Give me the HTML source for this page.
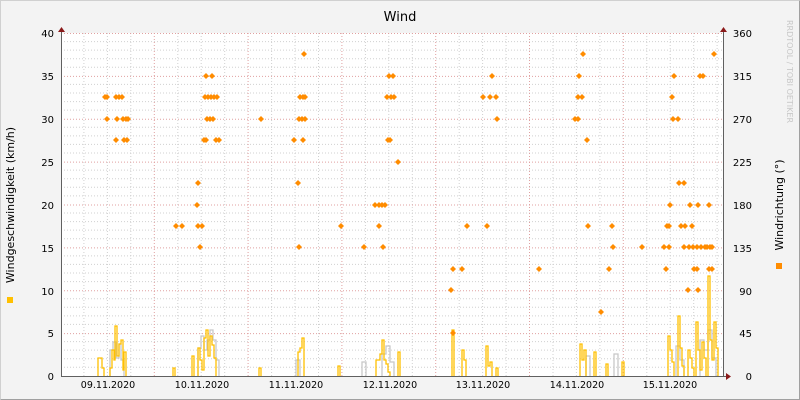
<!DOCTYPE html><html><head><style>body{margin:0;background:#f3f3f3}svg{display:block;font-family:"DejaVu Sans","Liberation Sans",sans-serif}</style></head><body>
<svg width="800" height="400" xmlns="http://www.w3.org/2000/svg">
<rect x="0" y="0" width="800" height="400" fill="#f3f3f3"/>
<path d="M0.5 399.5V0.5H799.5" stroke="#d0d0d0" fill="none"/>
<path d="M0.5 399.5H799.5V0.5" stroke="#a0a0a0" fill="none"/>
<rect x="61" y="33" width="662" height="343" fill="#ffffff"/>
<g id="g" stroke-dasharray="1,2" stroke-width="1">
<g stroke="#d0d0d0">
<path d="M61 41.6H723M61 50.1H723M61 58.7H723M61 67.3H723M61 84.4H723M61 93H723M61 101.6H723M61 110.1H723M61 127.3H723M61 135.9H723M61 144.4H723M61 153H723M61 170.1H723M61 178.7H723M61 187.3H723M61 195.9H723M61 213H723M61 221.6H723M61 230.1H723M61 238.7H723M61 255.9H723M61 264.4H723M61 273H723M61 281.6H723M61 298.7H723M61 307.3H723M61 315.9H723M61 324.4H723M61 341.6H723M61 350.1H723M61 358.7H723M61 367.3H723"/>
<path d="M83.9 33V376M107.4 33V376M130.8 33V376M177.8 33V376M201.2 33V376M224.7 33V376M271.6 33V376M295 33V376M318.5 33V376M365.4 33V376M388.8 33V376M412.3 33V376M459.2 33V376M482.6 33V376M506.1 33V376M553 33V376M576.4 33V376M599.9 33V376M646.8 33V376M670.2 33V376M693.7 33V376M717.1 33V376"/>
</g>
<g stroke="#e0a0a0">
<path d="M61 33.5H723M61 76.4H723M61 119.2H723M61 162.1H723M61 205H723M61 247.9H723M61 290.8H723M61 333.6H723"/>
<path d="M154.3 33V376M248.1 33V376M341.9 33V376M435.7 33V376M529.5 33V376M623.3 33V376"/>
</g></g>
<g fill="none" stroke-width="1.3">
<path stroke="#c8c8c8" d="M110 376V350H113V342H116V358H119V344H121V360H124V376M198 376V348H201V336H204V350H207V340H210V330H213V340H216V360H219V376M296 376V360H300V376M362 376V362H366V376M382 376V354H386V346H390V362H394V376M586 376V356H590V376M614 376V354H618V376M676 376V346H680V360H684V376M700 376V340H704V350H708V330H712V358H716V376"/>
<path stroke="#ffc000" d="M98 376V358H102V368H104V376M110 376V368H112V350H114V360H115V326H117V356H119V344H121V340H123V370H124V352H126V376M173 376V368H175V376M192 376V356H194V376M198 376V348H200V360H202V370H204V338H206V330H208V356H210V336H212V345H214V358H216V376M259 376V368H261V376M298 376V352H300V348H302V338H304V376M338 376V366H340V376M376 376V360H380V354H382V340H384V360H386V364H388V372H390V376M398 376V352H400V376M452 376V330H454V376M462 376V350H464V360H466V376M486 376V346H488V366H490V362H492V376M496 376V368H498V376M580 376V344H582V360H584V350H586V376M594 376V352H596V376M606 376V364H608V376M622 376V362H624V376M668 376V336H670V350H672V362H674V376M678 376V316H680V348H682V366H684V376M688 376V350H690V358H692V368H694V376M696 376V322H698V350H700V370H702V342H704V358H706V376M708 376V276H710V340H712V360H714V322H716V348H718V376"/>
</g>
<g fill="#ff8c00" id="dots"></g>
<path d="M61 376.5H727M61.5 28V376M723.5 28V376" stroke="#606060" stroke-width="1" fill="none"/>
<path d="M58 32L61.5 27L65 32Z M720 32L723.5 27L727 32Z M726 373L731 376.5L726 380Z" fill="#8b1a1a"/>
<g font-size="10" fill="#000" text-anchor="end">
<text x="54" y="37">40</text><text x="54" y="80">35</text><text x="54" y="123">30</text><text x="54" y="166">25</text><text x="54" y="209">20</text><text x="54" y="252">15</text><text x="54" y="295">10</text><text x="54" y="337">5</text><text x="54" y="380">0</text>
</g>
<g font-size="10" fill="#000" text-anchor="end">
<text x="752" y="37">360</text><text x="752" y="80">315</text><text x="752" y="123">270</text><text x="752" y="166">225</text><text x="752" y="209">180</text><text x="752" y="252">135</text><text x="752" y="295">90</text><text x="752" y="337">45</text><text x="752" y="380">0</text>
</g>
<g font-size="9.5" fill="#000" text-anchor="middle">
<text x="108" y="388">09.11.2020</text><text x="202" y="388">10.11.2020</text><text x="296" y="388">11.11.2020</text><text x="390" y="388">12.11.2020</text><text x="483" y="388">13.11.2020</text><text x="577" y="388">14.11.2020</text><text x="670" y="388">15.11.2020</text>
</g>
<text x="400" y="21" font-size="13" text-anchor="middle" fill="#000">Wind</text>
<text transform="translate(14,205) rotate(-90)" font-size="11" text-anchor="middle" fill="#000">Windgeschwindigkeit (km/h)</text>
<text transform="translate(783,205) rotate(-90)" font-size="11" text-anchor="middle" fill="#000">Windrichtung (°)</text>
<text transform="translate(787,20) rotate(90)" font-size="8" fill="#c8c8c8">RRDTOOL / TOBI OETIKER</text>
<rect x="7" y="297" width="6" height="6" fill="#ffc000"/>
<rect x="776" y="263" width="6" height="6" fill="#ff8c00"/>
</svg>
<script>
var d={97:[105,107,116,119,122,387,391,394,483,490,496,578,582,672,208,211,214,217,205,300,303,305],
119:[107,117,123,126,128,207,210,213,261,299,302,305,497,575,578,673,678],
140:[116,124,127,204,206,216,219,294,303,388,390,587],
54:[304,583,714],76:[206,212,389,393,492,579,674,700,703],
162:[398],183:[198,298,679,684],205:[197,375,379,382,385,670,690,698,709],
226:[176,182,198,202,341,379,467,487,588,612,667,669,681,685,692],
247:[200,299,364,383,613,642,664,669,684,689,693,697,701,705,707,710,712],
269:[453,462,539,609,666,694,697,709,712],290:[451,688,698],312:[601],333:[453]};
var g=document.getElementById('dots'),s='';
for(var y in d)d[y].forEach(function(x){s+='<path d="M'+(x-3)+' '+y+'L'+x+' '+(y-3)+'L'+(x+3)+' '+y+'L'+x+' '+(+y+3)+'Z"/>';});
g.innerHTML=s;
</script>
</body></html>
